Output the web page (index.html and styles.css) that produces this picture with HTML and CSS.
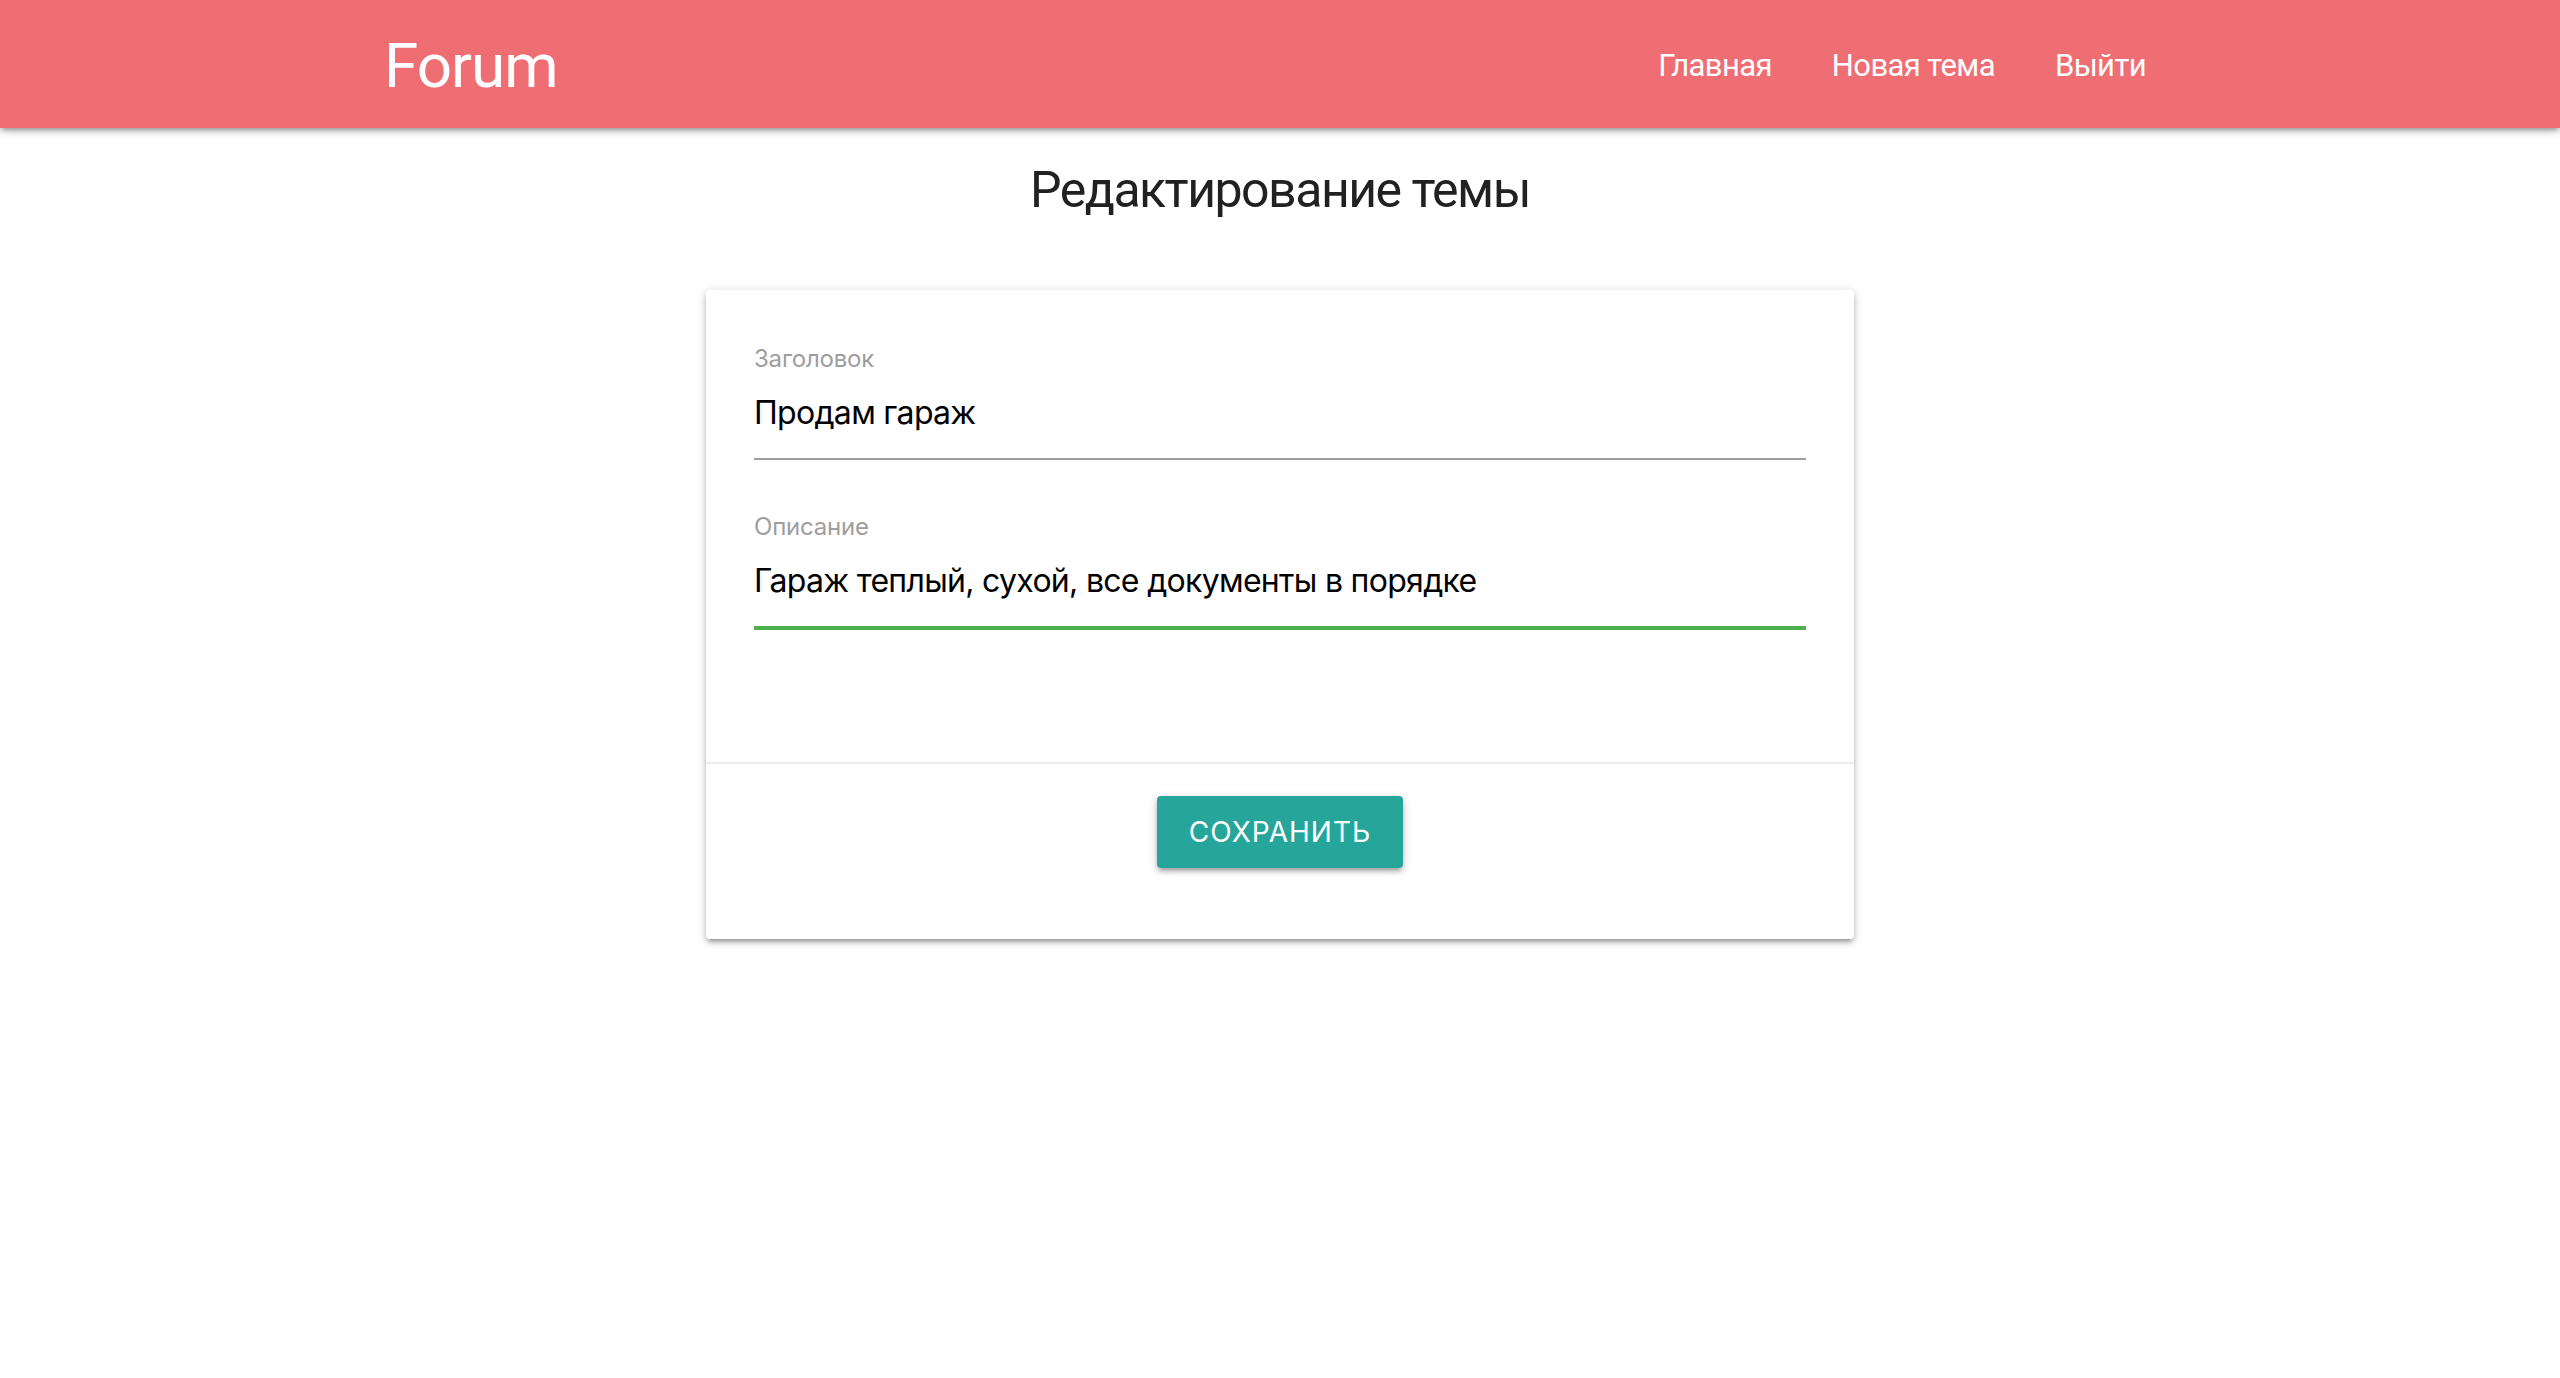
FILE: index.html
```html
<!DOCTYPE html>
<html lang="ru">
<head>
<meta charset="utf-8">
<title>Forum</title>
<link rel="stylesheet" href="styles.css">
</head>
<body>
<nav class="navbar">
  <div class="nav-wrapper">
    <a class="brand" href="#">Forum</a>
    <ul class="nav-links">
      <li><a href="#">Главная</a></li>
      <li><a href="#">Новая тема</a></li>
      <li><a href="#">Выйти</a></li>
    </ul>
  </div>
</nav>
<main class="main">
  <h5 class="page-title">Редактирование темы</h5>
  <div class="card">
    <div class="card-content">
      <div class="field">
        <label class="field-label">Заголовок</label>
        <div class="field-input">Продам гараж</div>
      </div>
      <div class="field field-focused">
        <label class="field-label">Описание</label>
        <div class="field-input">Гараж теплый, сухой, все документы в порядке</div>
      </div>
    </div>
    <div class="card-action">
      <button class="btn">Сохранить</button>
    </div>
  </div>
</main>
</body>
</html>
```
FILE: styles.css
```css
* { box-sizing: border-box; }
html, body {
  margin: 0;
  padding: 0;
  background: #fff;
  font-family: "Inter", "Roboto", "Noto Sans", sans-serif;
  color: rgba(0,0,0,0.87);
}
.navbar {
  height: 128px;
  background: #ee6e73;
  box-shadow: 0 4px 4px 0 rgba(0,0,0,0.14), 0 6px 2px -4px rgba(0,0,0,0.12), 0 2px 10px 0 rgba(0,0,0,0.2);
}
.nav-wrapper {
  width: 1792px;
  margin: 0 auto;
  height: 128px;
  padding-top: 3px;
  display: flex;
  align-items: center;
  justify-content: space-between;
}
.brand {
  color: #fff;
  text-decoration: none;
  font-family: "Roboto", "Inter", sans-serif;
  font-size: 62px;
  letter-spacing: -1px;
  line-height: 125px;
}
.nav-links {
  list-style: none;
  margin: 0;
  padding: 0;
  display: flex;
}
.nav-links a {
  display: block;
  color: #fff;
  text-decoration: none;
  font-family: "Roboto", "Inter", sans-serif;
  font-size: 31px;
  letter-spacing: -0.6px;
  line-height: 125px;
  padding: 0 30px;
}
.main {
  display: flex;
  flex-direction: column;
  align-items: center;
  padding-bottom: 40px;
}
.page-title {
  margin: 33px 0 0;
  font-family: "Roboto", "Inter", sans-serif;
  font-size: 50px;
  letter-spacing: -1.5px;
  line-height: 58px;
  font-weight: 400;
  color: #212121;
}
.card {
  margin-top: 71px;
  width: 1148px;
  background: #fff;
  border-radius: 4px;
  box-shadow: 0 4px 4px 0 rgba(0,0,0,0.16), 0 6px 2px -4px rgba(0,0,0,0.14), 0 2px 10px 0 rgba(0,0,0,0.2);
}
.card-content {
  padding: 53px 48px 0;
}
.field {
  display: flex;
  flex-direction: column;
  border-bottom: 2px solid #9e9e9e;
  margin-bottom: 51px;
}
.field-label {
  font-size: 24px;
  letter-spacing: -0.2px;
  line-height: 32px;
  color: #9e9e9e;
}
.field-input {
  font-size: 32px;
  line-height: 76px;
  height: 83px;
  color: #000;
  letter-spacing: -0.7px;
}
.field-focused {
  border-bottom-color: #4caf50;
  box-shadow: 0 2px 0 0 #4caf50;
  margin-bottom: 134px;
}
.card-action {
  border-top: 2px solid rgba(160,160,160,0.2);
  padding: 32px 48px 71px;
  display: flex;
  justify-content: center;
}
.btn {
  height: 72px;
  padding: 0 32px;
  border: none;
  border-radius: 4px;
  background: #26a69a;
  color: #fff;
  font-family: inherit;
  font-size: 28px;
  letter-spacing: 1px;
  text-transform: uppercase;
  line-height: 72px;
  box-shadow: 0 4px 4px 0 rgba(0,0,0,0.14), 0 6px 2px -4px rgba(0,0,0,0.12), 0 2px 10px 0 rgba(0,0,0,0.2);
  cursor: pointer;
}
```
